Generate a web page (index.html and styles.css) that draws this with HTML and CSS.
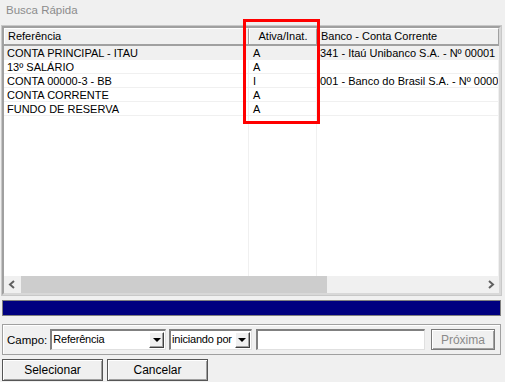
FILE: index.html
```html
<!DOCTYPE html>
<html>
<head>
    <title>Busca Rápida</title>
    <link rel="stylesheet" href="styles.css">
</head>
<body>

<div class="window">
    <div class="title">Busca Rápida</div>

    <div class="grid">
        <div class="grid-head">
            <div class="cell col-ref">Referência</div>
            <div class="cell col-ativa">Ativa/Inat.</div>
            <div class="cell col-banco">Banco - Conta Corrente</div>
        </div>
        <div class="grid-body">
            <div class="row selected">
                <div class="cell col-ref">CONTA PRINCIPAL - ITAU</div>
                <div class="cell col-ativa">A</div>
                <div class="cell col-banco">341 - Itaú Unibanco S.A. - Nº 00001</div>
            </div>
            <div class="row">
                <div class="cell col-ref">13º SALÁRIO</div>
                <div class="cell col-ativa">A</div>
                <div class="cell col-banco"></div>
            </div>
            <div class="row">
                <div class="cell col-ref">CONTA 00000-3 - BB</div>
                <div class="cell col-ativa">I</div>
                <div class="cell col-banco">001 - Banco do Brasil S.A. - Nº 00000</div>
            </div>
            <div class="row">
                <div class="cell col-ref">CONTA CORRENTE</div>
                <div class="cell col-ativa">A</div>
                <div class="cell col-banco"></div>
            </div>
            <div class="row">
                <div class="cell col-ref">FUNDO DE RESERVA</div>
                <div class="cell col-ativa">A</div>
                <div class="cell col-banco"></div>
            </div>
            <div class="row filler">
                <div class="cell col-ref"></div>
                <div class="cell col-ativa"></div>
                <div class="cell col-banco"></div>
            </div>
        </div>
        <div class="hscroll">
            <div class="arrow">
                <svg width="17" height="17" viewBox="0 0 17 17"><polyline points="10,5 6,8.5 10,12" fill="none" stroke="#606060" stroke-width="2"/></svg>
            </div>
            <div class="track"><div class="thumb"></div></div>
            <div class="arrow">
                <svg width="17" height="17" viewBox="0 0 17 17"><polyline points="7,5 11,8.5 7,12" fill="none" stroke="#606060" stroke-width="2"/></svg>
            </div>
        </div>
        <!-- destaque da coluna -->
        <div class="highlight"></div>
    </div>

    <div class="progress"></div>

    <div class="search-box">
        <label class="lbl">Campo:</label>
        <div class="combo combo-campo">
            <span class="combo-text">Referência</span>
            <span class="combo-btn"><span class="tri"></span></span>
        </div>
        <div class="combo combo-tipo">
            <span class="combo-text">iniciando por</span>
            <span class="combo-btn"><span class="tri"></span></span>
        </div>
        <input type="text" class="busca">
        <button class="btn btn-proxima" disabled>Próxima</button>
    </div>

    <div class="actions">
        <button class="btn btn-main">Selecionar</button>
        <button class="btn btn-main">Cancelar</button>
    </div>
</div>

</body>
</html>
```

FILE: styles.css
```css
body {
    margin: 0;
    background-color: #f0f0f0;
    font-family: "Liberation Sans", Arial, sans-serif;
    font-size: 11px;
    color: #000;
}
.window {
    width: 505px;
    height: 382px;
    display: flex;
    flex-direction: column;
}
.title {
    color: #8c8c8c;
    font-size: 11.5px;
    padding: 4px 0 0 6px;
    height: 20px;
    box-sizing: border-box;
}
.grid {
    position: relative;
    margin: 6px 4px 0 2px;
    height: 269px;
    border-top: 2px solid #a0a0a0;
    border-left: 2px solid #a0a0a0;
    border-right: 2px solid #d8d8d8;
    border-bottom: 2px solid #d8d8d8;
    outline: 1px solid #c8c8c8;
    background-color: #fff;
    display: flex;
    flex-direction: column;
    box-sizing: border-box;
}
.grid-head {
    display: flex;
    height: 16px;
    background-color: #fff;
    border-bottom: 2px solid #a0a0a0;
}
.grid-head .cell {
    border: 1px solid #fff;
    border-right-color: #a0a0a0;
    border-bottom: none;
    background-color: #f0f0f0;
    padding-left: 3px;
    line-height: 15px;
}
.grid-head .col-ativa {
    text-align: center;
    padding-left: 0;
}
.cell {
    box-sizing: border-box;
    white-space: nowrap;
    overflow: hidden;
}
.col-ref {
    width: 245px;
}
.col-ativa {
    width: 68px;
}
.col-banco {
    flex: 1;
}
.grid-body {
    flex: 1;
    display: flex;
    flex-direction: column;
}
.row {
    display: flex;
    height: 13px;
    border-bottom: 1px solid #f0f0f0;
    box-sizing: content-box;
}
.row .cell {
    padding-left: 3px;
    line-height: 14px;
    border-right: 1px solid #f0f0f0;
}
.row .col-ativa {
    padding-left: 4px;
}
.row.selected {
    background-color: #f0f0f0;
}
.row.filler {
    flex: 1;
    border-bottom: none;
}
.hscroll {
    display: flex;
    height: 17px;
    background-color: #f0f0f0;
}
.hscroll .arrow {
    width: 17px;
    height: 17px;
}
.track {
    flex: 1;
}
.thumb {
    width: 306px;
    height: 17px;
    background-color: #cdcdcd;
}
.highlight {
    position: absolute;
    left: 239px;
    top: -9px;
    width: 77px;
    height: 105px;
    border: 3px solid #ff0000;
    box-sizing: border-box;
}
.progress {
    margin: 5px 4px 0 2px;
    height: 16px;
    background-color: #000080;
    border: 1px solid #808080;
    box-sizing: border-box;
}
.search-box {
    margin: 8px 4px 0 2px;
    height: 31px;
    border: 1px solid #a0a0a0;
    box-shadow: inset 1px 1px 0 #fff;
    display: flex;
    align-items: center;
    padding: 0 5px 0 4px;
    gap: 3px;
    box-sizing: border-box;
}
.lbl {
    font-size: 11.5px;
}
.combo {
    display: flex;
    height: 21px;
    border-top: 2px solid #808080;
    border-left: 2px solid #808080;
    border-right: 1px solid #e0e0e0;
    border-bottom: 1px solid #e0e0e0;
    background-color: #fff;
    box-sizing: border-box;
    align-items: stretch;
}
.combo-campo {
    width: 119px;
}
.combo-tipo {
    width: 85px;
}
.combo-text {
    flex: 1;
    font-size: 11px;
    letter-spacing: -0.2px;
    line-height: 17px;
    padding-left: 1px;
    white-space: nowrap;
    overflow: hidden;
}
.combo-btn {
    width: 15px;
    margin: 1px 1px 1px 0;
    background-color: #f0f0f0;
    border-top: 1px solid #fff;
    border-left: 1px solid #fff;
    border-right: 1px solid #404040;
    border-bottom: 1px solid #404040;
    box-shadow: inset -1px -1px 0 #a0a0a0;
    box-sizing: border-box;
    display: flex;
    align-items: center;
    justify-content: center;
}
.tri {
    width: 0;
    height: 0;
    border-left: 4px solid transparent;
    border-right: 4px solid transparent;
    border-top: 4px solid #000;
}
.busca {
    width: 169px;
    height: 21px;
    margin: 0 0 0 1px;
    padding: 0;
    border-top: 2px solid #808080;
    border-left: 2px solid #808080;
    border-right: 1px solid #e0e0e0;
    border-bottom: 1px solid #e0e0e0;
    box-sizing: border-box;
}
.btn {
    font-family: "Liberation Sans", Arial, sans-serif;
    font-size: 12px;
    background-color: #f0f0f0;
    border: 1px solid #555;
    box-shadow: inset 1px 1px 0 #fff, inset -1px -1px 0 #a0a0a0;
    padding: 0;
    color: #000;
}
.btn-proxima {
    width: 66px;
    height: 21px;
    margin-left: 3px;
    color: #8a8a8a;
    border-color: #7a7a7a;
}
.actions {
    display: flex;
    gap: 4px;
    margin: 4px 0 0 2px;
}
.btn-main {
    width: 101px;
    height: 22px;
}
```
